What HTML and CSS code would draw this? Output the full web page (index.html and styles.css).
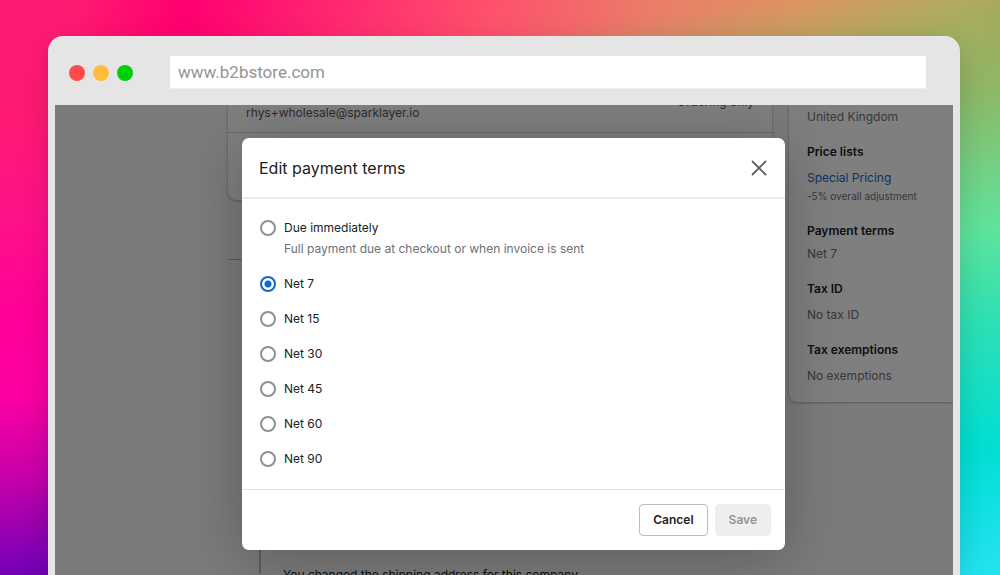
FILE: index.html
```html
<!DOCTYPE html>
<html lang="en">
<head>
<meta charset="utf-8">
<meta name="viewport" content="width=device-width, initial-scale=1">
<title>Edit payment terms</title>
<link rel="stylesheet" href="styles.css">
</head>
<body>
<div class="browser">
  <header class="chrome">
    <div class="lights">
      <span class="light light-red"></span>
      <span class="light light-amber"></span>
      <span class="light light-green"></span>
    </div>
    <input class="address" type="text" value="www.b2bstore.com" aria-label="Address">
  </header>
  <div class="viewport">
    <div class="admin">
      <main class="main">
        <section class="card">
          <div class="customer">
            <span class="permission">Ordering only</span>
            <span class="email">rhys+wholesale@sparklayer.io</span>
          </div>
          <div class="card-rest"></div>
        </section>
        <section class="timeline">
          <p class="event">You changed the shipping address for this company.</p>
        </section>
      </main>
      <aside class="side">
        <p class="country">United Kingdom</p>
        <h2>Price lists</h2>
        <p class="gap-large"><a href="#">Special Pricing</a></p>
        <p class="note">-5% overall adjustment</p>
        <h2>Payment terms</h2>
        <p>Net 7</p>
        <h2>Tax ID</h2>
        <p class="gap-large">No tax ID</p>
        <h2>Tax exemptions</h2>
        <p class="gap-large">No exemptions</p>
      </aside>
    </div>
    <div class="backdrop">
      <form class="modal" role="dialog" aria-labelledby="title">
        <header class="modal-head">
          <h1 id="title">Edit payment terms</h1>
          <button class="close" type="button" aria-label="Close">
            <svg width="16" height="16" viewBox="0 0 16 16"><path d="M1.5 1.5 14.5 14.5M14.5 1.5 1.5 14.5" fill="none" stroke="#5c5f62" stroke-width="1.8" stroke-linecap="round"/></svg>
          </button>
        </header>
        <div class="options">
          <div class="option">
            <label><input type="radio" name="terms" aria-describedby="due-help">Due immediately</label>
            <p class="help" id="due-help">Full payment due at checkout or when invoice is sent</p>
          </div>
          <label><input type="radio" name="terms" checked>Net 7</label>
          <label><input type="radio" name="terms">Net 15</label>
          <label><input type="radio" name="terms">Net 30</label>
          <label><input type="radio" name="terms">Net 45</label>
          <label><input type="radio" name="terms">Net 60</label>
          <label><input type="radio" name="terms">Net 90</label>
        </div>
        <footer class="modal-foot">
          <button class="button" type="button">Cancel</button>
          <button class="button" type="submit" disabled>Save</button>
        </footer>
      </form>
    </div>
  </div>
</div>
</body>
</html>
```
FILE: styles.css
```css
* {
  box-sizing: border-box;
}

body {
  display: flex;
  height: 100vh;
  margin: 0;
  padding: 36px 40px 0 48px;
  overflow: hidden;
  color: #202223;
  font: 12px/20px Inter, "Liberation Sans", sans-serif;
  background:
    linear-gradient(172deg, rgba(255, 16, 138, 0) 18%, #ff108a 36%, #ff0098 50%, #fb00a2 62%, #c800aa 74%, #8c00b4 85%, #6400b8 92%, #5600b4 100%) left / 50% 100% no-repeat,
    linear-gradient(172deg, rgba(150, 175, 95, 0) 6%, #8fb765 24%, #5ee49b 46%, #2fe0b4 60%, #00dfd4 80%, #22e2f0 98%) right / 50% 100% no-repeat,
    linear-gradient(100deg, #ff1a75 0%, #ff1a72 7%, #ff0070 17%, #ff2f70 33%, #ff4f6c 44%, #e97f68 60%, #dc975f 75%, #bba75c 87%, #9a9d4a 100%);
}

h1,
h2,
p {
  margin: 0;
}

button,
input {
  font: inherit;
}

.browser {
  display: flex;
  flex: 1;
  flex-direction: column;
  padding: 0 7px;
  background: #e5e5e5;
  border-radius: 15px 15px 0 0;
  box-shadow: 0 8px 30px rgba(0, 0, 0, 0.16);
}

.chrome {
  display: flex;
  align-items: center;
  gap: 37px;
  height: 69px;
  padding: 4px 27px 0 14px;
}

.lights {
  display: flex;
  gap: 8px;
}

.light {
  width: 16px;
  height: 16px;
  border-radius: 50%;
}

.light-red {
  background: #ff4b4a;
}

.light-amber {
  background: #ffbd3e;
}

.light-green {
  background: #00ce0b;
}

.address {
  flex: 1;
  height: 33px;
  padding: 0 8px;
  color: #949494;
  font: 17px Roboto, sans-serif;
  background: #fff;
  border: 0;
  border-bottom: 1px solid #efefef;
}

.viewport {
  position: relative;
  flex: 1;
  min-height: 0;
  overflow: hidden;
  background: #f6f6f7;
}

.admin {
  display: grid;
  grid-template-columns: 1fr 164px;
  gap: 17px;
  align-items: start;
  padding-left: 173px;
}

.card,
.side {
  background: #fff;
  box-shadow: 0 0 2px rgba(0, 0, 0, 0.2), 0 1px 3px rgba(0, 0, 0, 0.2);
}

.card {
  border-radius: 0 0 8px 8px;
}

.customer {
  display: flex;
  flex-direction: row-reverse;
  justify-content: space-between;
  align-items: flex-end;
  height: 28px;
  padding: 0 18px 9px;
  border-bottom: 1px solid #d0d3d6;
  color: #55595d;
}

.permission {
  padding-bottom: 11px;
}

.card-rest {
  height: 67px;
}

.timeline {
  margin-top: 59px;
  border-top: 1px solid #b5b8bb;
}

.event {
  margin-left: 31px;
  padding: 305px 0 0 24px;
}

.event::before {
  content: "";
  position: absolute;
  top: 440px;
  left: 204px;
  width: 2px;
  height: 28px;
  background: #b5b8bb;
}

.side {
  padding: 2px 18px 16px;
  border-radius: 0 0 0 8px;
  color: #6d7175;
}

.side h2 {
  margin: 15px 0 3px;
  color: #202223;
  font-size: 12px;
  font-weight: 600;
}

.side .note {
  margin-top: -2px;
  font-size: 10px;
  white-space: nowrap;
}

.side .gap-large {
  margin-top: 6px;
}

.side a {
  color: #1168c8;
  text-decoration: none;
}

.backdrop {
  position: absolute;
  inset: 0;
  padding: 33px 168px 0 187px;
  background: rgba(0, 0, 0, 0.5);
}

.modal {
  background: #fff;
  border-radius: 7px;
  box-shadow: 0 8px 60px rgba(0, 0, 0, 0.25);
}

.modal-head {
  display: flex;
  align-items: center;
  justify-content: space-between;
  height: 61px;
  padding: 0 18px 0 17px;
  border-bottom: 2px solid #ebebeb;
}

.modal-head h1 {
  font-size: 16px;
  font-weight: 400;
}

.close {
  display: flex;
  padding: 0;
  background: none;
  border: 0;
}

.options {
  display: flex;
  flex-direction: column;
  gap: 15px;
  padding: 19px 18px 20px;
}

label {
  display: flex;
  align-items: center;
  gap: 8px;
}

input[type="radio"] {
  width: 16px;
  height: 16px;
  margin: 0;
  appearance: none;
  border: 2px solid #8c9196;
  border-radius: 50%;
}

input[type="radio"]:checked {
  border-color: #1168c8;
  background: radial-gradient(circle, #1168c8 3px, #fff 4px);
}

.help {
  margin: 1px 0 0 24px;
  color: #6d7175;
}

.modal-foot {
  display: flex;
  justify-content: flex-end;
  gap: 7px;
  padding: 14px;
  border-top: 1px solid #e4e4e4;
}

.button {
  height: 32px;
  padding: 0 13px;
  color: #202223;
  font-weight: 600;
  background: #fff;
  border: 1px solid #babfc3;
  border-radius: 4px;
}

.button:disabled {
  color: #919497;
  background: #eee;
  border-color: #eee;
}
```
